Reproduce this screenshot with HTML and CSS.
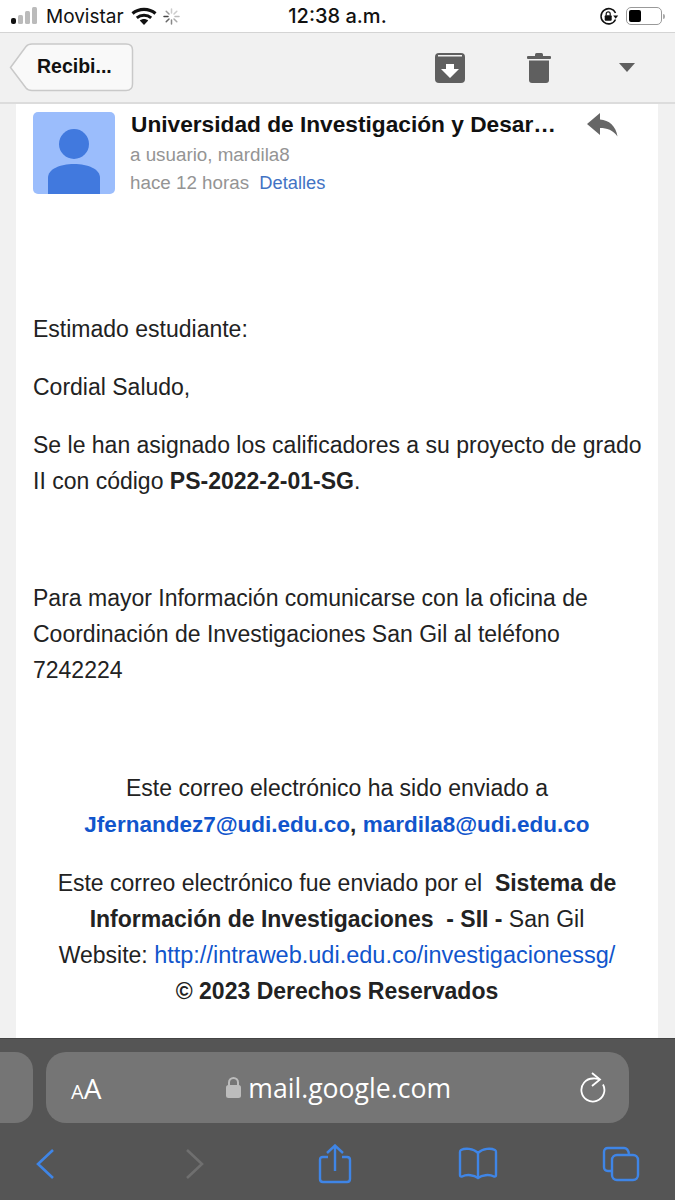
FILE: index.html
```html
<!DOCTYPE html>
<html lang="es">
<head>
    <meta charset="UTF-8">
    <meta name="viewport" content="width=device-width, initial-scale=1.0">
    <title>Correo</title>
    <link rel="stylesheet" href="styles.css">
</head>
<body>
    <div class="status">
        <div class="status-left">
            <svg class="signal" width="28" height="18" viewBox="0 0 28 18">
                <rect x="0" y="11" width="5" height="6" rx="2" fill="#111"/>
                <rect x="7" y="8" width="5" height="9" rx="1.5" fill="#bbb"/>
                <rect x="14" y="4" width="5" height="13" rx="1.5" fill="#bbb"/>
                <rect x="21" y="0" width="5" height="17" rx="1.5" fill="#bbb"/>
            </svg>
            <span>Movistar</span>
            <svg class="wifi" width="26" height="19" viewBox="0 0 26 19">
                <path d="M1.500 6.500C8 1 18 1 24.500 6.500" fill="none" stroke="#111" stroke-width="3.200"/>
                <path d="M5.800 10.800C9.800 7.500 16.200 7.500 20.200 10.800" fill="none" stroke="#111" stroke-width="3"/>
                <path d="M8.800 13.500C11.200 11.500 14.800 11.500 17.200 13.500L13 18Z" fill="#111"/>
            </svg>
            <svg class="spinner" width="17" height="17" viewBox="0 0 17 17" stroke-width="1.500" stroke-linecap="round">
                <path d="M8.500 1v4" stroke="#ccc"/>
                <path d="M13.800 3.200l-2.800 2.800" stroke="#ccc"/>
                <path d="M16 8.500h-4" stroke="#bbb"/>
                <path d="M13.800 13.800l-2.800-2.800" stroke="#aaa"/>
                <path d="M8.500 16v-4" stroke="#888"/>
                <path d="M3.200 13.800l2.800-2.800" stroke="#666"/>
                <path d="M1 8.500h4" stroke="#444"/>
                <path d="M3.200 3.200l2.800 2.800" stroke="#999"/>
            </svg>
        </div>
        <div class="status-time">12:38 a.m.</div>
        <div class="status-right">
            <svg width="20" height="19" viewBox="0 0 20 19">
                <path d="M16.500 12.500A7.600 7.600 0 1 1 16.500 6" fill="none" stroke="#111" stroke-width="1.500"/>
                <path d="M14.200 8.500h5l-2.500 3.200z" fill="#111"/>
                <rect x="5.700" y="8.200" width="7" height="5.600" rx="1" fill="#111"/>
                <path d="M7.200 8.500V6.800a2 2 0 0 1 4 0v1.700" fill="none" stroke="#111" stroke-width="1.200"/>
            </svg>
            <div class="battery"><div class="battery-level"></div></div>
            <div class="battery-tip"></div>
        </div>
    </div>

    <div class="toolbar">
        <svg class="back-btn" width="125" height="49" viewBox="0 0 125 49">
            <path d="M1.500 24.500L17 3.500Q19 1 23 1H117Q123.500 1 123.500 7V41Q123.500 47.500 117 47.500H23Q19 47.500 17 45Z" fill="#f9f9f9" stroke="#c9c9c9" stroke-width="1.500"/>
            <text x="28" y="30" class="back-label">Recibi...</text>
        </svg>
        <svg class="tool-archive" width="30" height="30" viewBox="0 0 30 30">
            <path d="M0 4Q0 0 4 0H26Q30 0 30 4V26Q30 30 26 30H4Q0 30 0 26Z" fill="#5f5f5f"/>
            <rect x="3" y="2" width="24" height="1.500" fill="#f1f1f1"/>
            <path d="M11 11H19V16H24L15 25L6 16H11Z" fill="#fff"/>
        </svg>
        <svg class="tool-trash" width="24" height="30" viewBox="0 0 24 30">
            <rect x="0" y="3" width="24" height="3" rx="1" fill="#5f5f5f"/>
            <rect x="8" y="0" width="8" height="4" rx="1.500" fill="#5f5f5f"/>
            <path d="M2 7.500H22V27Q22 30 19 30H5Q2 30 2 27Z" fill="#5f5f5f"/>
        </svg>
        <svg class="tool-more" width="16" height="9" viewBox="0 0 16 9">
            <path d="M0 0H16L8 9Z" fill="#5f5f5f"/>
        </svg>
    </div>

    <div class="mail">
        <div class="card">
            <div class="head">
                <svg class="avatar" width="82" height="82" viewBox="0 0 82 82">
                    <rect width="82" height="82" rx="5" fill="#9bbdfc"/>
                    <circle cx="41" cy="32" r="15" fill="#4179de"/>
                    <path d="M15 82V66C15 57 27 52 41 52S67 57 67 66V82Z" fill="#4179de"/>
                </svg>
                <div class="head-text">
                    <div class="sender">Universidad de Investigación y Desar…</div>
                    <div class="meta to">a usuario, mardila8</div>
                    <div class="meta when">hace 12 horas <a class="details">Detalles</a></div>
                </div>
                <svg class="reply" width="31" height="24" viewBox="0 0 31 24">
                    <path d="M13 0V6.500C22 7 29 13 30.500 23.500C26 17 20 15 13 15V22L0 11Z" fill="#666"/>
                </svg>
            </div>

            <div class="body">
                <p>Estimado estudiante:</p>
                <p>Cordial Saludo,</p>
                <p>Se le han asignado los calificadores a su proyecto de grado II con código <b>PS-2022-2-01-SG</b>.</p>
                <p class="spaced">Para mayor Información comunicarse con la oficina de Coordinación de Investigaciones San Gil al teléfono 7242224</p>
            </div>

            <div class="foot">
                <p>Este correo electrónico ha sido enviado a<br><b class="emails"><a>Jfernandez7@udi.edu.co</a>, <a>mardila8@udi.edu.co</a></b></p>
                <p>Este correo electrónico fue enviado por el&nbsp; <b>Sistema de Información de Investigaciones &nbsp;- SII -</b> San Gil<br>Website: <a class="site">http://intraweb.udi.edu.co/investigacionessg/</a><br><b>© 2023 Derechos Reservados</b></p>
            </div>
        </div>
    </div>

    <div class="safari">
        <div class="url-row">
            <div class="tab-stub"></div>
            <div class="url-bar">
                <span class="aa"><small>A</small>A</span>
                <span class="domain">
                    <svg width="15" height="21" viewBox="0 0 15 21">
                        <rect x="0" y="8" width="15" height="13" rx="2.500" fill="#bcbcbc"/>
                        <path d="M3 9V5.500a4.500 4.500 0 0 1 9 0V9" fill="none" stroke="#bcbcbc" stroke-width="2"/>
                    </svg>
                    mail.google.com
                </span>
                <svg class="reload" width="27" height="31" viewBox="0 0 27 31" fill="none" stroke="#fff" stroke-width="1.800">
                    <path d="M19 7Q15 6.300 13 6.500A11.500 11.500 0 1 0 23 12.500"/>
                    <path d="M12 1l8 6.500-8 6.500"/>
                </svg>
            </div>
        </div>
        <div class="nav-row">
            <svg class="nav-back" width="20" height="32" viewBox="0 0 20 32" fill="none" stroke="#3f85e6" stroke-width="2.600">
                <path d="M17 2L2 16L17 30"/>
            </svg>
            <svg class="nav-forward" width="20" height="32" viewBox="0 0 20 32" fill="none" stroke="#6f6f6f" stroke-width="2.600">
                <path d="M3 2L18 16L3 30"/>
            </svg>
            <svg class="nav-share" width="34" height="40" viewBox="0 0 34 40" fill="none" stroke="#3f85e6" stroke-width="2.400">
                <path d="M10 13H5Q2 13 2 16V35Q2 38 5 38H29Q32 38 32 35V16Q32 13 29 13H24"/>
                <path d="M17 27V2M9 9L17 1.500L25 9"/>
            </svg>
            <svg class="nav-book" width="40" height="33" viewBox="0 0 40 33" fill="none" stroke="#3f85e6" stroke-width="2.400">
                <path d="M20 6C15 1 7 1 3 3Q2 3.500 2 5V28Q2 30 4 29.500C9 27 16 28 20 31C24 28 31 27 36 29.500Q38 30 38 28V5Q38 3.500 37 3C33 1 25 1 20 6Z"/>
                <path d="M20 6V31"/>
            </svg>
            <svg class="nav-tabs" width="38" height="36" viewBox="0 0 38 36" fill="none" stroke="#3f85e6" stroke-width="2.400">
                <path d="M9 25H6Q2 25 2 21V6Q2 2 6 2H22Q26 2 27 8"/>
                <rect x="10" y="9" width="26" height="25" rx="5"/>
            </svg>
        </div>
    </div>
</body>
</html>
```
FILE: styles.css
```css
* {
    box-sizing: border-box;
}

body {
    margin: 0;
    height: 1200px;
    overflow: hidden;
    display: flex;
    flex-direction: column;
    font-family: "Liberation Sans", Arial, sans-serif;
    background-color: #f1f1f1;
    color: #222;
}

svg {
    display: block;
    flex-shrink: 0;
}

.status {
    height: 33px;
    display: grid;
    grid-template-columns: 1fr auto 1fr;
    align-items: center;
    background-color: #fff;
    border-bottom: 1px solid #d4d4d4;
    font-family: Inter, sans-serif;
    font-size: 19px;
    color: #111;
}

.status-left {
    display: flex;
    align-items: center;
    padding-left: 11px;
}

.status-left span {
    margin-left: 7px;
}

.wifi {
    margin-left: 7px;
}

.spinner {
    margin-left: 6px;
}

.status-time {
    font-size: 20px;
    font-weight: 500;
}

.status-right {
    display: flex;
    align-items: center;
    justify-content: flex-end;
    padding-right: 10px;
}

.battery {
    width: 36px;
    height: 18px;
    margin-left: 7px;
    padding: 2px;
    border: 1px solid #999;
    border-radius: 5px;
}

.battery-level {
    width: 12px;
    height: 12px;
    background-color: #000;
    border-radius: 2px;
}

.battery-tip {
    width: 2px;
    height: 5px;
    margin-left: 1px;
    background-color: #aaa;
    border-radius: 0 2px 2px 0;
}

.toolbar {
    height: 71px;
    display: flex;
    align-items: center;
    padding-left: 9px;
    background-color: #f1f1f1;
    border-bottom: 2px solid #dcdcdc;
}

.back-label {
    font-size: 19.500px;
    font-weight: bold;
    fill: #111;
}

.tool-archive {
    margin-left: 301px;
}

.tool-trash {
    margin-left: 62px;
}

.tool-more {
    margin-left: 68px;
}

.mail {
    flex: 1;
    min-height: 0;
    padding: 0 17px 0 16px;
}

.card {
    height: 100%;
    padding: 8px 17px 0;
    background-color: #fff;
}

.head {
    display: flex;
    align-items: flex-start;
}

.head-text {
    width: 456px;
    margin-left: 16px;
}

.sender {
    font-size: 22.700px;
    font-weight: bold;
    line-height: 24px;
    color: #111;
}

.meta {
    margin-left: -1px;
    font-size: 18.800px;
    line-height: 28px;
    color: #949494;
}

.to {
    margin-top: 5px;
}

.details {
    margin-left: 5px;
    font-size: 18.300px;
    color: #4273c4;
}

.reply {
    margin-top: 1px;
}

.body {
    margin-top: 114px;
    margin-right: -5px;
    font-size: 23px;
    line-height: 36px;
}

p {
    margin: 0 0 22px;
}

.spaced {
    margin-top: 81px;
}

.foot {
    margin-top: 82px;
    text-align: center;
    font-size: 23px;
    line-height: 36px;
}

.foot a {
    color: #1155cc;
}

.emails {
    font-size: 22.500px;
}

.foot .site {
    font-size: 23.500px;
}

.safari {
    height: 162px;
    padding-top: 13px;
    background-color: #555;
    border-top: 1px solid #444;
}

.url-row {
    display: flex;
    height: 71px;
}

.tab-stub {
    width: 33px;
    background-color: #757575;
    border-radius: 0 18px 18px 0;
}

.url-bar {
    width: 583px;
    margin-left: 13px;
    padding: 0 22px 0 25px;
    display: flex;
    align-items: center;
    justify-content: space-between;
    background-color: #757575;
    border-radius: 20px;
    color: #fff;
    font-family: "Open Sans", sans-serif;
}

.aa {
    font-size: 28px;
}

.aa small {
    font-size: 20px;
}

.domain {
    display: flex;
    align-items: center;
    gap: 7px;
    font-size: 26.600px;
    margin-right: 4px;
}

.nav-row {
    display: flex;
    align-items: center;
    height: 75px;
    padding: 6px 0 0 36px;
}

.nav-forward {
    margin-left: 128px;
}

.nav-share {
    margin-left: 114px;
}

.nav-book {
    margin-left: 106px;
}

.nav-tabs {
    margin-left: 104px;
}
```
